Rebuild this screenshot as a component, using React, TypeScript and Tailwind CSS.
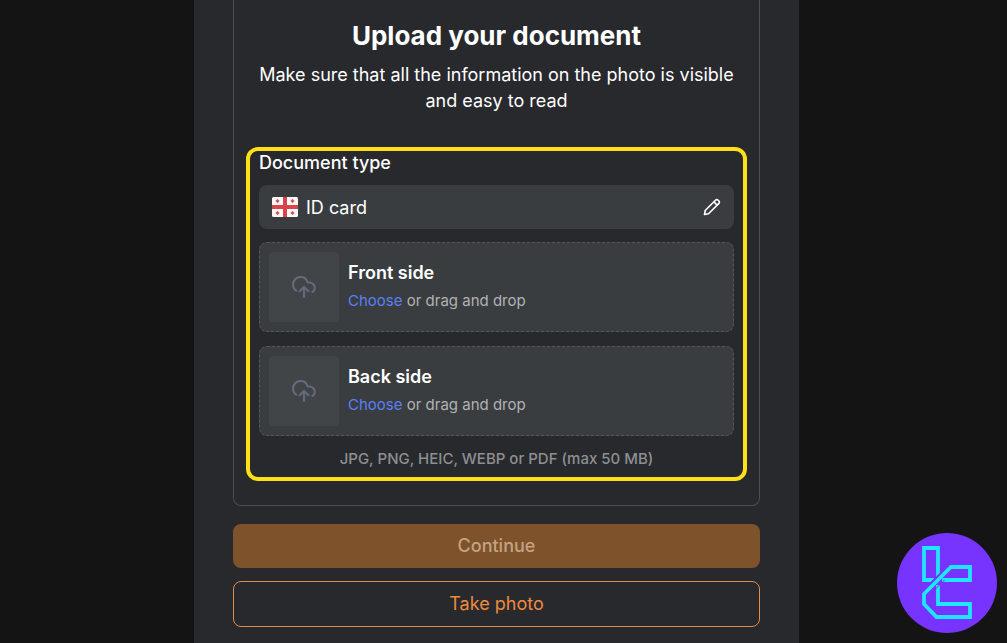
import { useState } from 'react';

interface UploadSlotProps {
  id: string;
  title: string;
}

const GEORGIA_CROSSES = [
  [5.5, 4],
  [20.5, 4],
  [5.5, 16],
  [20.5, 16],
];

function GeorgiaFlag() {
  return (
    <svg viewBox="0 0 26 20" className="w-[26px] h-5 shrink-0" aria-hidden="true">
      <rect width="26" height="20" rx="1.5" fill="#fafafa" />
      <path d="M11 0h4v20h-4z" fill="#d9454a" />
      <path d="M0 8h26v4H0z" fill="#d9454a" />
      {GEORGIA_CROSSES.map(([x, y]) => (
        <path
          key={`${x}-${y}`}
          d={`M${x - 1.8} ${y}h3.6M${x} ${y - 1.8}v3.6`}
          stroke="#d9454a"
          strokeWidth="1.5"
        />
      ))}
    </svg>
  );
}

function PencilIcon() {
  return (
    <svg viewBox="0 0 18 18" className="w-[18px] h-[18px] shrink-0" fill="none" aria-hidden="true">
      <path
        d="M1.500 16.500l.7-4L12.400 2.300a2 2 0 0 1 2.800 0l.5.5a2 2 0 0 1 0 2.800L5.500 15.800l-4 .7zM11.600 3.100L12 5.200l.8.8 2.100.4"
        stroke="#fff"
        strokeWidth="1.6"
        strokeLinejoin="round"
        strokeLinecap="round"
      />
    </svg>
  );
}

function CloudIcon() {
  return (
    <svg viewBox="0 0 24 22" className="w-6 h-[22px]" fill="none" aria-hidden="true">
      <path
        d="M4.2 14.6A7 7 0 0 1 1 8.7 7.6 7.6 0 0 1 8.6 1c3.700 0 6 2.200 7 5.500h1.600A5.600 5.600 0 0 1 22.800 12c0 1.900-.9 3.200-2.300 4M12 21V11.400M7.600 15.200L12 10.900l4.400 4.300"
        stroke="#636a7c"
        strokeWidth="2.1"
        strokeLinecap="round"
        strokeLinejoin="round"
      />
    </svg>
  );
}

function BrandLogo() {
  return (
    <svg viewBox="0 0 100 100" className="w-[100px] h-[100px]" fill="none" aria-hidden="true">
      <circle cx="50" cy="50" r="50" fill="#7733ff" />
      <path d="M37 47H27V15h14v29" stroke="#1fe5ff" strokeWidth="3.8" />
      <path d="M54 34L27 61" stroke="#7733ff" strokeWidth="7.500" />
      <path
        d="M45 47H73V34H54L27 61v10l12.500 13H73V71H41V52"
        stroke="#1fe5ff"
        strokeWidth="3.8"
      />
      {/* gaps that let the diagonal run over the stems */}
      <path d="M33 51.500l9-9M38 56.500l9.500-9.500" stroke="#7733ff" strokeWidth="1" />
    </svg>
  );
}

function UploadSlot({ id, title }: UploadSlotProps) {
  return (
    <div className="flex items-center gap-[9px] h-[90px] px-[9px] rounded-lg border border-dashed border-[#55585b] bg-[#3a3d40]">
      <div className="flex items-center justify-center w-[70px] h-[70px] shrink-0 rounded bg-[#424548]">
        <CloudIcon />
      </div>
      <div>
        <h2 id={id} className="text-[18px] leading-7 font-semibold text-white">{title}</h2>
        <p className="text-[15px] leading-7 text-[#b0b2b4]">
          <button type="button" aria-describedby={id} className="text-[#5b7ff5] cursor-pointer">Choose</button> or drag and drop
        </p>
      </div>
    </div>
  );
}

export default function App() {
  const [files] = useState<File[]>([]);

  return (
    <div className="relative flex justify-center min-h-screen bg-[#141414] pr-[14px] font-['Inter',sans-serif]">
      <main className="w-full max-w-[605px] bg-[#27292d] px-[39px] pb-4">
        <section className="rounded-b-lg border border-t-0 border-[#4c4e52] px-3 pt-[18px] pb-6">
          <h1 className="text-center text-[26px] leading-9 font-bold text-white">Upload your document</h1>
          <p className="mt-2 text-center text-[18px] leading-[26px] text-white">
            Make sure that all the information on the photo is visible and easy to read
          </p>

          <div className="mt-[33px] rounded-xl border-4 border-[#ffe017] px-[9px] pb-[6px]">
            <label htmlFor="doc-type" className="block text-[18px] leading-6 font-medium text-white">
              Document type
            </label>
            <button
              id="doc-type"
              type="button"
              className="mt-[10px] flex items-center w-full h-11 px-[13px] rounded-lg bg-[#3a3d40] text-[18px] text-white cursor-pointer"
            >
              <GeorgiaFlag />
              <span className="ml-2 mr-auto">ID card</span>
              <PencilIcon />
            </button>

            <div className="mt-[13px] flex flex-col gap-[14px]">
              <UploadSlot id="front-side" title="Front side" />
              <UploadSlot id="back-side" title="Back side" />
            </div>

            <p className="mt-[11px] text-center text-[15px] leading-6 font-medium text-[#8d8f92]">
              JPG, PNG, HEIC, WEBP or PDF (max 50 MB)
            </p>
          </div>
        </section>

        <button
          type="button"
          disabled={files.length < 2}
          className="mt-[18px] block w-full h-11 pb-[2px] rounded-lg bg-[#7e522a] text-[18px] font-medium text-[#c4a382]"
        >
          Continue
        </button>
        <button
          type="button"
          className="mt-[13px] block w-full h-[46px] pb-[2px] rounded-lg border border-[#e08c4e] text-[18px] text-[#f08a3e] cursor-pointer"
        >
          Take photo
        </button>
      </main>

      <div className="absolute right-[10px] bottom-[10px]">
        <BrandLogo />
      </div>
    </div>
  );
}
